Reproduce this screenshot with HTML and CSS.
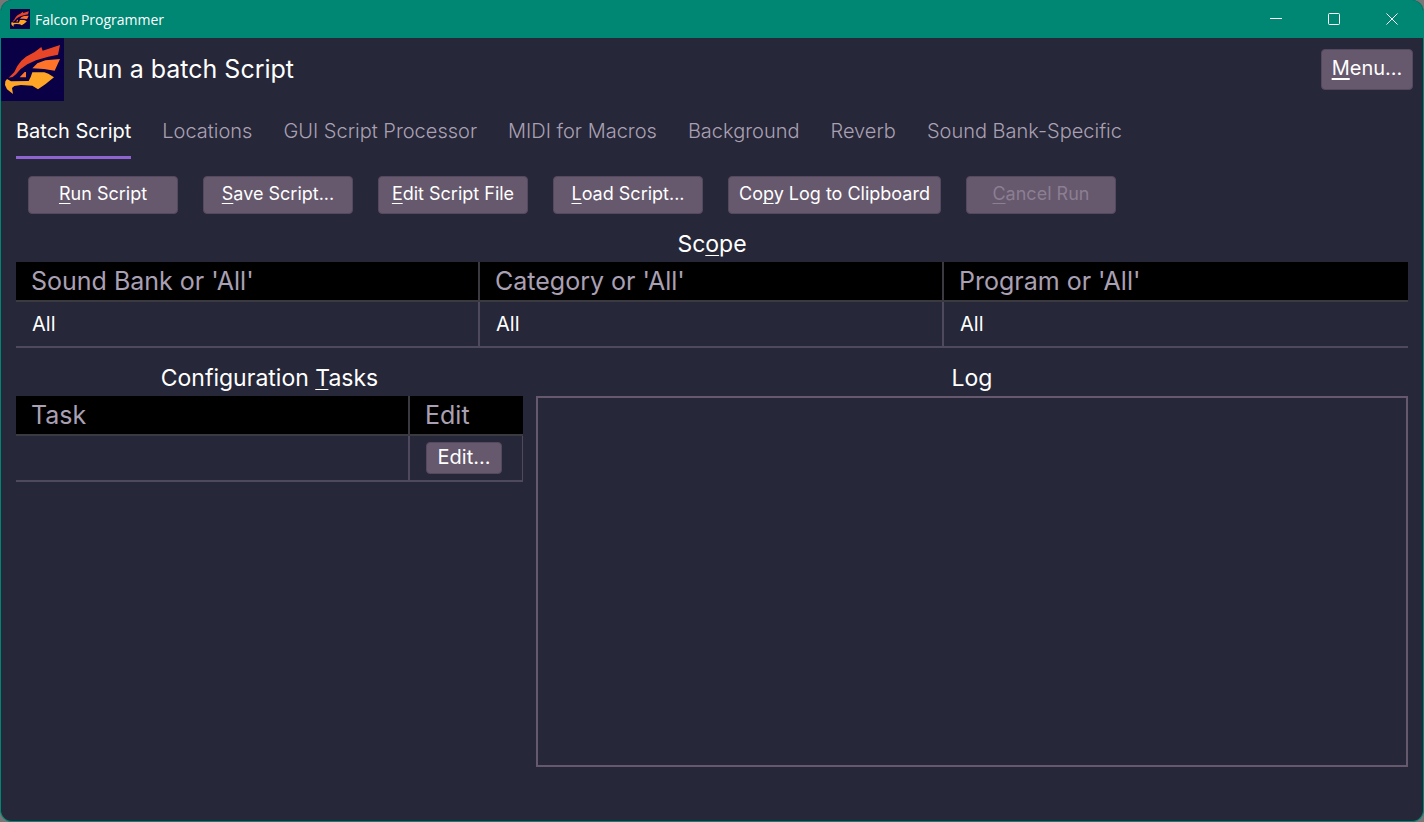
FILE: index.html
```html
<!DOCTYPE html>
<html lang="en">
<head>
<meta charset="utf-8">
<title>Falcon Programmer</title>
<link rel="stylesheet" href="styles.css">
</head>
<body>
<svg class="defs" aria-hidden="true">
  <symbol id="falcon" viewBox="3 0 189 189">
    <rect x="3" width="189" height="189" fill="#090045"/>
    <path fill="#e64528" d="M26 119 43 102 52 84 64 68 78 56 104 42 124 27 128 38 180 21 174 50 145 56 108 67 82 79 62 93 48 109 38 117Z"/>
    <path fill="#ff7429" d="M97 91 112 76 136 67 180 63 164 98 132 93ZM59 118 66 110 74 102 78 102 78 118Z"/>
    <path fill="#ffa526" d="M21 123 33 130 86 129 92 117 97 103 133 103 145 107 162 118 136 139 114 154 97 143 63 141 43 144 36 150 39 168 21 154 15 141 16 130Z"/>
  </symbol>
</svg>
<div class="window">
  <header class="titlebar">
    <svg class="titlebar-icon"><use href="#falcon"/></svg>
    <span class="titlebar-text">Falcon Programmer</span>
    <button class="caption" aria-label="Minimize"><svg viewBox="0 0 12 12"><path d="M0 5.500H12"/></svg></button>
    <button class="caption" aria-label="Maximize"><svg viewBox="0 0 12 12"><rect x=".5" y=".5" width="11" height="11" rx="1"/></svg></button>
    <button class="caption" aria-label="Close"><svg viewBox="0 0 12 12"><path d="M.5.5 11.500 11.500M11.500.5.5 11.500"/></svg></button>
  </header>
  <div class="heading">
    <svg class="logo"><use href="#falcon"/></svg>
    <h1>Run a batch Script</h1>
    <button class="button menu"><u>M</u>enu...</button>
  </div>
  <nav class="tabs" role="tablist">
    <button class="tab selected" role="tab" aria-selected="true">Batch Script</button>
    <button class="tab" role="tab">Locations</button>
    <button class="tab" role="tab">GUI Script Processor</button>
    <button class="tab" role="tab">MIDI for Macros</button>
    <button class="tab" role="tab">Background</button>
    <button class="tab" role="tab">Reverb</button>
    <button class="tab" role="tab">Sound Bank-Specific</button>
  </nav>
  <main>
    <div class="actions">
      <button class="button action"><u>R</u>un Script</button>
      <button class="button action"><u>S</u>ave Script...</button>
      <button class="button action"><u>E</u>dit Script File</button>
      <button class="button action"><u>L</u>oad Script...</button>
      <button class="button action">Co<u>p</u>y Log to Clipboard</button>
      <button class="button action" disabled><u>C</u>ancel Run</button>
    </div>
    <section class="scope">
      <h2 id="scope">Sc<u>o</u>pe</h2>
      <table class="grid" aria-labelledby="scope">
        <thead><tr><th>Sound Bank or 'All'</th><th>Category or 'All'</th><th>Program or 'All'</th></tr></thead>
        <tbody><tr><td>All</td><td>All</td><td>All</td></tr></tbody>
      </table>
    </section>
    <div class="panels">
      <section class="tasks">
        <h2 id="tasks">Configuration <u>T</u>asks</h2>
        <table class="grid closed" aria-labelledby="tasks">
          <thead><tr><th>Task</th><th class="edit-column">Edit</th></tr></thead>
          <tbody><tr><td></td><td><button class="button edit">Edit...</button></td></tr></tbody>
        </table>
      </section>
      <section class="log">
        <h2><label for="log">Log</label></h2>
        <textarea id="log" readonly></textarea>
      </section>
    </div>
  </main>
</div>
</body>
</html>
```

FILE: styles.css
```css
* { box-sizing: border-box; }

body {
  margin: 0;
  background: #777;
  color: #fff;
  font-family: Inter, "Liberation Sans", sans-serif;
  font-size: 20px;
}

button { font: inherit; color: inherit; border: 0; background: none; padding: 0; }

h1, h2 { margin: 0; font-weight: 400; }

u { text-decoration-thickness: 1px; text-underline-offset: 3px; text-decoration-skip-ink: none; }

.defs { position: absolute; width: 0; height: 0; }

.window {
  display: flex;
  flex-direction: column;
  min-height: 100vh;
  border: 1px solid #008774;
  border-top: 0;
  border-radius: 12px;
  overflow: hidden;
  background: #262738;
}

.titlebar {
  display: flex;
  align-items: center;
  height: 38px;
  padding: 0 2px 0 9px;
  background: #008774;
  font: 14px "Open Sans", "Noto Sans", sans-serif;
}

.titlebar-icon { width: 20px; height: 20px; margin-right: 5px; }
.titlebar-text { flex: 1; }

.caption {
  display: grid;
  place-items: center;
  width: 58px;
  height: 38px;
}

.caption svg { width: 12px; height: 12px; fill: none; stroke: #fff; }

.heading { display: flex; align-items: center; gap: 13px; padding-right: 10px; }
.logo { width: 63px; height: 63px; }
.heading h1 { flex: 1; padding-bottom: 2px; font-size: 25px; line-height: 30px; }

.button {
  border: 1px solid #55495f;
  border-radius: 4px;
  background: #66586d;
}

.button:disabled { color: #8b7f92; }

.menu { height: 41px; width: 92px; padding-bottom: 4px; }
.menu u { text-decoration-thickness: 2px; }

.tabs { display: flex; gap: 31px; padding: 18px 15px 0; }

.tab {
  padding: 0 0 12px;
  border-bottom: 3px solid transparent;
  color: #aaa0b3;
  font-weight: 300;
  line-height: 25px;
}

.tab.selected { border-color: #8f63d2; color: #fff; font-weight: 400; }

main { display: flex; flex: 1; flex-direction: column; padding: 17px 15px 54px; }

.actions { display: flex; gap: 25px; padding: 0 12px; }

.action {
  min-width: 150px;
  height: 38px;
  padding: 0 10px 4px;
  font-size: 18px;
}

h2 { padding-bottom: 4px; font-size: 23px; line-height: 28px; text-align: center; }

.scope { padding-top: 16px; }

.grid { width: 100%; border-collapse: separate; border-spacing: 0; table-layout: fixed; }

.grid th {
  height: 40px;
  padding: 0 15px;
  border-bottom: 2px solid #3b3a40;
  background: #000;
  color: #aaa0b3;
  font-size: 25px;
  font-weight: 400;
  line-height: 30px;
  text-align: left;
}

.grid td { height: 46px; padding: 0 16px; border-bottom: 2px solid #4e495d; }
.grid th:not(:last-child) { border-right: 2px solid #3b3a40; }
.grid td:not(:last-child) { border-right: 2px solid #4e495d; }
.closed td:last-child { border-right: 1px solid #4e495d; }

.panels { display: flex; flex: 1; gap: 13px; padding-top: 16px; }
.tasks { width: 507px; }
.edit-column { width: 113px; }
.edit { display: block; width: 76px; height: 32px; padding-bottom: 2px; }

.log { display: flex; flex: 1; flex-direction: column; }

.log textarea {
  flex: 1;
  border: 2px solid #66586d;
  background: transparent;
  color: inherit;
  font: inherit;
  resize: none;
}
```
